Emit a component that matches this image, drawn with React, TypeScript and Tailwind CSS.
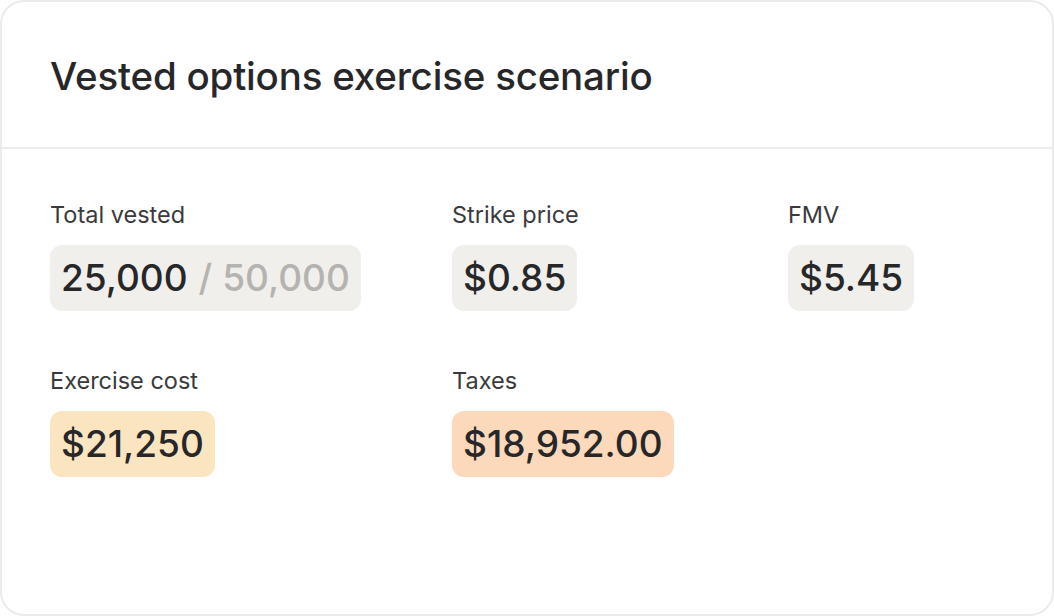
import React from "react";

type Field = {
  label: string;
  value: string;
  total?: string;
  tone: "plain" | "cost" | "tax";
};

const fields: Field[] = [
  { label: "Total vested", value: "25,000", total: "50,000", tone: "plain" },
  { label: "Strike price", value: "$0.85", tone: "plain" },
  { label: "FMV", value: "$5.45", tone: "plain" },
  { label: "Exercise cost", value: "$21,250", tone: "cost" },
  { label: "Taxes", value: "$18,952.00", tone: "tax" },
];

const toneClass = {
  plain: "bg-[#f0efec]",
  cost: "bg-[#fbe5c0]",
  tax: "bg-[#fcd9bb]",
};

function ValueCell({ field }: { field: Field }) {
  return (
    <div className="flex flex-col items-start gap-[14px]">
      <span className="text-[23.5px] leading-[32px] text-[#3a3a3c]">{field.label}</span>
      <div
        className={`h-[66px] px-[11px] rounded-[12px] flex items-center text-[37px] font-medium text-[#27272a] ${toneClass[field.tone]}`}
      >
        {field.value}
        {field.total && (
          <span className="ml-[11px] text-[#b5b3af]">/ {field.total}</span>
        )}
      </div>
    </div>
  );
}

export default function App() {
  return (
    <div className="w-[1054px] h-[616px] bg-white font-['Inter',sans-serif]">
      <div className="w-full h-full rounded-[24px] border-2 border-[#ebebeb] overflow-hidden">
        <div className="h-[147px] px-[48px] flex items-center border-b-2 border-[#ebebeb]">
          <h1 className="pt-[4px] text-[38.5px] font-medium text-[#27272a] tracking-[-0.2px]">
            Vested options exercise scenario
          </h1>
        </div>
        <div className="px-[48px] pt-[50px] grid grid-cols-[402px_336px_1fr] gap-y-[54px]">
          {fields.map((f) => (
            <ValueCell key={f.label} field={f} />
          ))}
        </div>
      </div>
    </div>
  );
}
